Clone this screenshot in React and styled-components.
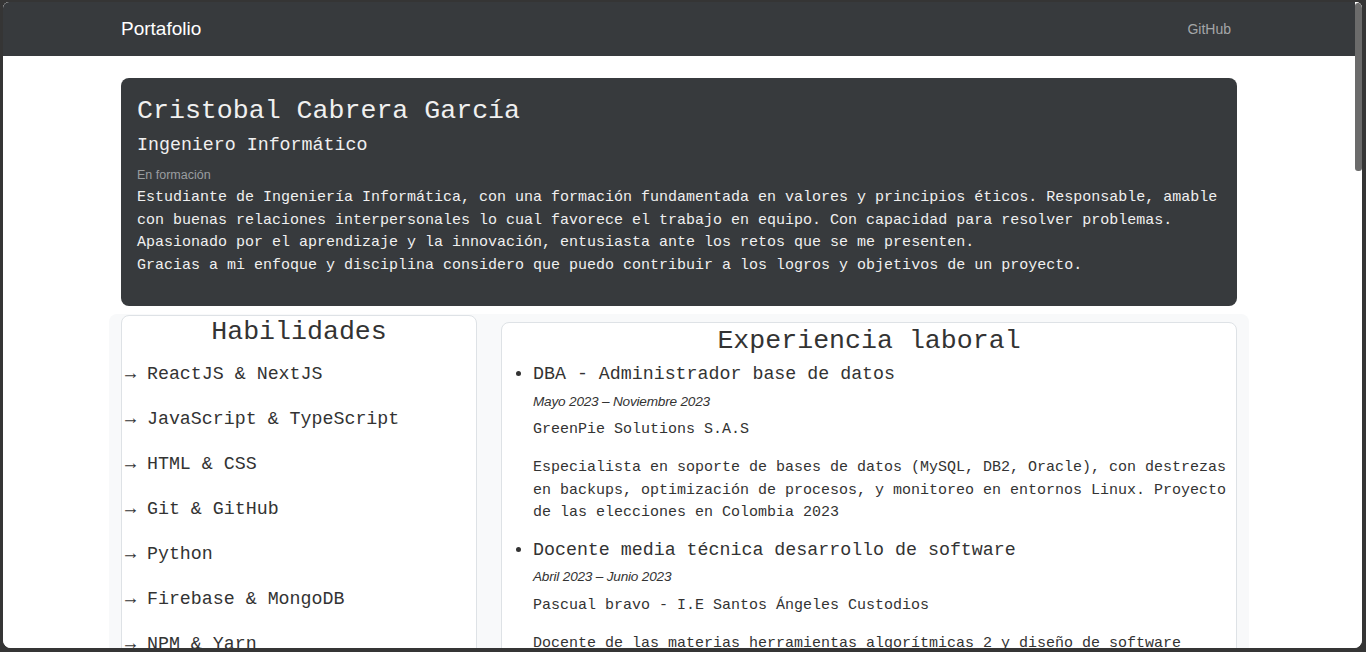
import styled, { createGlobalStyle } from "styled-components";

const skills = [
  "ReactJS & NextJS",
  "JavaScript & TypeScript",
  "HTML & CSS",
  "Git & GitHub",
  "Python",
  "Firebase & MongoDB",
  "NPM & Yarn",
  "Docker",
];

const jobs = [
  {
    title: "DBA - Administrador base de datos",
    date: "Mayo 2023 – Noviembre 2023",
    company: "GreenPie Solutions S.A.S",
    text: "Especialista en soporte de bases de datos (MySQL, DB2, Oracle), con destrezas en backups, optimización de procesos, y monitoreo en entornos Linux. Proyecto de las elecciones en Colombia 2023",
  },
  {
    title: "Docente media técnica desarrollo de software",
    date: "Abril 2023 – Junio 2023",
    company: "Pascual bravo - I.E Santos Ángeles Custodios",
    text: "Docente de las materias herramientas algorítmicas 2 y diseño de software orientado a objetos para estudiantes de media técnica.",
  },
];

function App() {
  return (
    <Frame>
      <GlobalStyle />
      <Window>
        <Page>
          <Navbar>
            <NavInner>
              <Brand>Portafolio</Brand>
              <NavLink>GitHub</NavLink>
            </NavInner>
          </Navbar>

          <Container>
            <Hero>
              <Name>Cristobal Cabrera García</Name>
              <Role>Ingeniero Informático</Role>
              <Muted>En formación</Muted>
              <About>
                Estudiante de Ingeniería Informática, con una formación
                fundamentada en valores y principios éticos. Responsable, amable
                con buenas relaciones interpersonales lo cual favorece el trabajo
                en equipo. Con capacidad para resolver problemas. Apasionado por
                el aprendizaje y la innovación, entusiasta ante los retos que se
                me presenten.
                <br />
                Gracias a mi enfoque y disciplina considero que puedo contribuir a
                los logros y objetivos de un proyecto.
              </About>
            </Hero>
          </Container>

          <Section>
            <Card>
              <CardTitle>Habilidades</CardTitle>
              {skills.map((s) => (
                <Skill key={s}>→ {s}</Skill>
              ))}
            </Card>
            <Card $offset>
              <CardTitle $low>Experiencia laboral</CardTitle>
              <Jobs>
                {jobs.map((j) => (
                  <Job key={j.title}>
                    <JobTitle>{j.title}</JobTitle>
                    <JobDate>{j.date}</JobDate>
                    <Company>{j.company}</Company>
                    <JobText>{j.text}</JobText>
                  </Job>
                ))}
              </Jobs>
            </Card>
          </Section>
        </Page>
        <ScrollTrack>
          <Thumb />
        </ScrollTrack>
      </Window>
    </Frame>
  );
}

//CSS//

const GlobalStyle = createGlobalStyle`
  html, body {
    margin: 0;
    padding: 0;
    height: 100%;
    background: #353535;
  }
  * {
    box-sizing: border-box;
  }
`;

const mono = `"Liberation Mono", "DejaVu Sans Mono", monospace`;
const sans = `"Liberation Sans", Arial, sans-serif`;

const Frame = styled.div`
  height: 100vh;
  padding: 2px 4px 4px 3px;
  background: #353535;
`;

const Window = styled.div`
  display: flex;
  height: 100%;
  border-radius: 6px 6px 8px 8px;
  overflow: hidden;
  background: #fff;
`;

const Page = styled.div`
  flex: 1;
  overflow: hidden;
  background: #fff;
`;

const ScrollTrack = styled.div`
  width: 7px;
  background: #fff;
`;

const Thumb = styled.div`
  height: 168px;
  margin-top: 1px;
  background: #6b6b6b;
  border-radius: 3px;
`;

const Navbar = styled.nav`
  height: 54px;
  background: #373a3d;
`;

const NavInner = styled.div`
  max-width: 1140px;
  height: 100%;
  margin: 0 auto;
  padding: 0 12px;
  display: flex;
  align-items: center;
  justify-content: space-between;
`;

const Brand = styled.span`
  font-family: ${sans};
  font-size: 19px;
  color: #fff;
`;

const NavLink = styled.span`
  font-family: ${sans};
  font-size: 14px;
  color: #a4a6a8;
  padding: 0 6px;
`;

const Container = styled.div`
  max-width: 1140px;
  margin: 22px auto 0;
  padding: 0 12px;
`;

const Hero = styled.div`
  background: #373a3d;
  border-radius: 8px;
  padding: 17px 16px 29px;
  color: #f0f0f0;
  font-family: ${mono};
`;

const Name = styled.h1`
  margin: 0 0 7px;
  font-size: 26.6px;
  line-height: 32px;
  font-weight: 400;
`;

const Role = styled.h2`
  margin: 0 0 10px;
  font-size: 18.3px;
  line-height: 22px;
  font-weight: 400;
`;

const Muted = styled.div`
  font-family: ${sans};
  font-size: 12.5px;
  line-height: 19px;
  color: #9a9da0;
`;

const About = styled.p`
  margin: 2px 0 0;
  font-size: 15px;
  line-height: 22.5px;
`;

const Section = styled.div`
  max-width: 1140px;
  margin: 8px auto 0;
  padding: 0 12px;
  background: #f8f9fa;
  border-radius: 8px;
  display: grid;
  grid-template-columns: 356px 1fr;
  gap: 24px;
  align-items: start;
`;

const Card = styled.div`
  margin-top: ${(p) => (p.$offset ? "8px" : "1px")};
  background: #fff;
  border: 1px solid #dee2e6;
  border-radius: 8px;
  font-family: ${mono};
  color: #333;
  padding-bottom: 16px;
`;

const CardTitle = styled.h2`
  margin: ${(p) => (p.$low ? "2px 0 12px" : "0 0 12px")};
  text-align: center;
  font-size: 26.6px;
  line-height: 32px;
  font-weight: 400;
`;

const Skill = styled.p`
  margin: 0 0 16px;
  padding-left: 3px;
  font-size: 18.3px;
  line-height: 29px;
`;

const Jobs = styled.ul`
  margin: -6px 0 0;
  padding: 0 2px 0 31px;
`;

const Job = styled.li`
  list-style: disc;
  font-size: 18.3px;
`;

const JobTitle = styled.div`
  font-size: 18.3px;
  line-height: 22px;
  margin-bottom: 5.5px;
`;

const JobDate = styled.div`
  font-family: ${sans};
  font-style: italic;
  font-size: 13.6px;
  line-height: 21px;
  margin-bottom: 7.5px;
  letter-spacing: -0.2px;
`;

const Company = styled.div`
  font-size: 15px;
  line-height: 22.5px;
  margin-bottom: 15.5px;
`;

const JobText = styled.p`
  margin: 0 0 14px;
  font-size: 15px;
  line-height: 22.5px;
`;

export default App;
